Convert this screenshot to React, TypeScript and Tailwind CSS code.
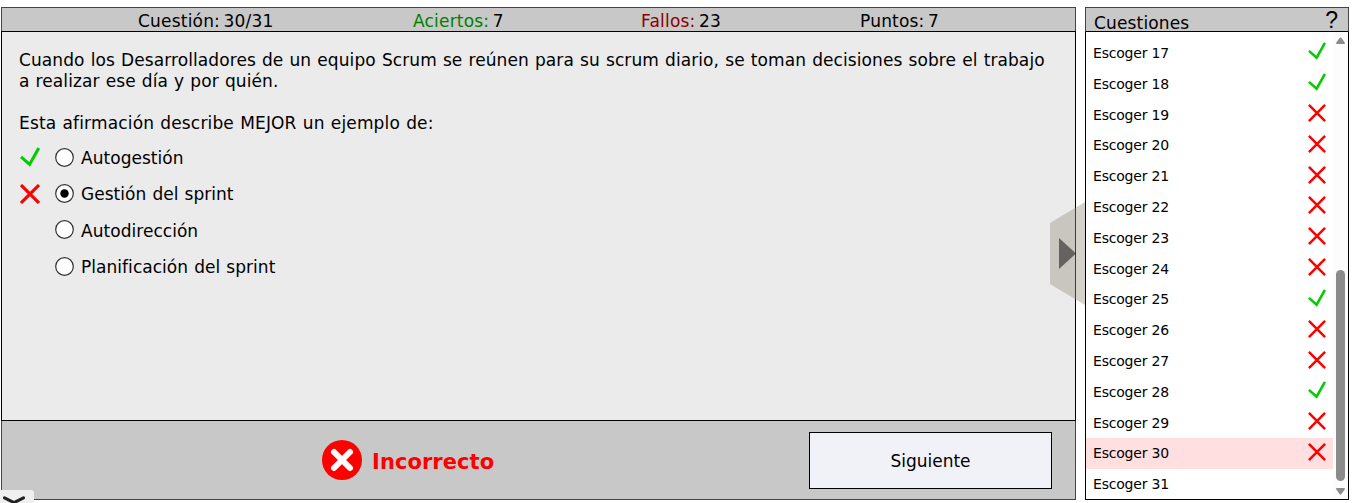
type Mark = 'ok' | 'bad' | null;

const questions: { n: number; mark: Mark }[] = [
  { n: 17, mark: 'ok' },
  { n: 18, mark: 'ok' },
  { n: 19, mark: 'bad' },
  { n: 20, mark: 'bad' },
  { n: 21, mark: 'bad' },
  { n: 22, mark: 'bad' },
  { n: 23, mark: 'bad' },
  { n: 24, mark: 'bad' },
  { n: 25, mark: 'ok' },
  { n: 26, mark: 'bad' },
  { n: 27, mark: 'bad' },
  { n: 28, mark: 'ok' },
  { n: 29, mark: 'bad' },
  { n: 30, mark: 'bad' },
  { n: 31, mark: null },
];

const options: { text: string; mark: Mark; selected?: boolean }[] = [
  { text: 'Autogestión', mark: 'ok' },
  { text: 'Gestión del sprint', mark: 'bad', selected: true },
  { text: 'Autodirección', mark: null },
  { text: 'Planificación del sprint', mark: null },
];

const stats = [
  { label: 'Cuestión:', value: '30/31', color: 'text-black' },
  { label: 'Aciertos:', value: '7', color: 'text-[#008000]' },
  { label: 'Fallos:', value: '23', color: 'text-[#8b0000]' },
  { label: 'Puntos:', value: '7', color: 'text-black' },
];

function MarkIcon({ mark, className, thick }: { mark: Mark; className: string; thick: number }) {
  return (
    <svg viewBox="0 0 20 20" className={className} fill="none" strokeWidth={thick}>
      {mark === 'ok' && <path d="M1 9.8 9.6 17.4 18.8 1" stroke="#00cc00" />}
      {mark === 'bad' && <path d="M1 1 19 19M19 1 1 19" stroke="#ff0000" />}
    </svg>
  );
}

export default function App() {
  return (
    <div className="relative flex h-[503px] w-[1352px] gap-[9px] overflow-hidden bg-white pt-[7px] pl-px font-['DejaVu_Sans',sans-serif] text-black">
      <main className="flex h-[493px] w-[1075px] flex-col border border-[#444] bg-[#c8c8c8]">
        <header className="grid h-[23px] shrink-0 grid-cols-[275px_228px_219px_1fr] pl-[136px] text-[17px] leading-[26px] tracking-[0.2px]">
          {stats.map((s) => (
            <div key={s.label} className="whitespace-nowrap">
              <span className={s.color}>{s.label}</span>
              <span className="ml-[3.5px]">{s.value}</span>
            </div>
          ))}
        </header>
        <section className="-mx-px h-[390px] shrink-0 border border-black bg-[#ebebeb] px-[17px] pt-[18px] text-[17px] leading-[21px] tracking-[0.09px] [word-spacing:0.6px]">
          <p className="whitespace-nowrap">
            Cuando los Desarrolladores de un equipo Scrum se reúnen para su scrum diario, se toman decisiones sobre el trabajo
            <br />a realizar ese día y por quién.
          </p>
          <p className="mt-[21px] tracking-[0.16px]">Esta afirmación describe MEJOR un ejemplo de:</p>
          <ul className="mt-[5.5px]">
            {options.map((o) => (
              <li key={o.text} className="flex h-[36.4px] items-center">
                <MarkIcon mark={o.mark} className="-mt-px ml-px size-[20px]" thick={3.1} />
                <svg viewBox="0 0 19 19" className="-mt-px ml-[15px] size-[19px]">
                  <circle cx="9.5" cy="9.5" r="8.8" fill="#fff" stroke="#333" strokeWidth="1.2" />
                  {o.selected && <circle cx="9.5" cy="9.5" r="4.2" />}
                </svg>
                <span className="ml-[7px] pt-[1.5px] tracking-[0.04px]">{o.text}</span>
              </li>
            ))}
          </ul>
        </section>
        <footer className="flex flex-1 pt-[11px]">
          <svg viewBox="0 0 40 40" className="mt-[8px] ml-[320px] size-[40px]">
            <circle cx="20" cy="20" r="20" fill="#f00" />
            <path d="M12 12 28 28M28 12 12 28" stroke="#fff" strokeWidth="6" strokeLinecap="round" />
          </svg>
          <strong className="ml-[10px] w-[437px] text-[21px] leading-[61px] tracking-[0.07px] text-[#f00]">Incorrecto</strong>
          <button className="h-[57px] w-[243px] border border-black bg-[#f1f2f7] pt-[2px] text-[17px]">Siguiente</button>
        </footer>
      </main>
      <aside className="flex h-[493px] w-[264px] flex-col border border-black bg-white">
        <header className="-mx-px -mt-px flex h-[25px] shrink-0 justify-between border border-[#444] border-b-black bg-[#c8c8c8] pr-[10px] pl-[8px]">
          <h2 className="text-[17px] leading-[31px] tracking-[0.15px]">Cuestiones</h2>
          <span className="font-['Liberation_Sans',sans-serif] text-[23px] leading-[25px]">?</span>
        </header>
        <div className="flex h-[467px] overflow-hidden">
          <ul className="w-[247px] pt-[5.5px] text-[14px] tracking-[-0.2px]">
            {questions.map((q) => (
              <li key={q.n} className={`flex h-[30.82px] items-center justify-between px-[7px] ${q.n === 30 ? 'bg-[#ffdfdf]' : ''}`}>
                <span className="pt-px">Escoger {q.n}</span>
                <MarkIcon mark={q.mark} className="mb-[3px] size-[18px]" thick={2.8} />
              </li>
            ))}
          </ul>
          <div className="flex w-[15px] flex-col items-center bg-[#fcfcfc] pt-[5px]">
            <svg viewBox="0 0 9 8" className="h-[8px] w-[9px]" fill="#8b8b8b"><path d="M3.5 1Q4.5 0 5.5 1L9 6Q9 7 8 7H1Q0 7 0 6Z" /></svg>
            <div className="mt-[225px] h-[211px] w-[9px] rounded-full bg-[#8b8b8b]" />
            <svg viewBox="0 0 9 8" className="mt-[7px] h-[8px] w-[9px]" fill="#8b8b8b"><path d="M3.5 6Q4.5 7 5.5 6L9 1Q9 0 8 0H1Q0 0 0 1Z" /></svg>
          </div>
        </div>
      </aside>
      <svg viewBox="0 0 35 103" className="absolute top-[202px] left-[1050px] h-[103px] w-[35px]">
        <path d="M0 21 35 0V103L0 82Z" fill="#9a9280" fillOpacity="0.41" />
        <path d="M9 36 26 51.5 9 67Z" fill="#000" fillOpacity="0.5" />
      </svg>
      <div className="absolute bottom-0 left-0 h-[13px] w-[34px] overflow-hidden rounded-tr-[3px] bg-[#efefef]">
        <svg viewBox="0 0 34 13" className="h-[13px] w-[34px]">
          <path d="M4.5 7.8 14 12.7 23.5 7.8" fill="none" stroke="#222" strokeWidth="3" strokeLinecap="round" />
        </svg>
      </div>
    </div>
  );
}
